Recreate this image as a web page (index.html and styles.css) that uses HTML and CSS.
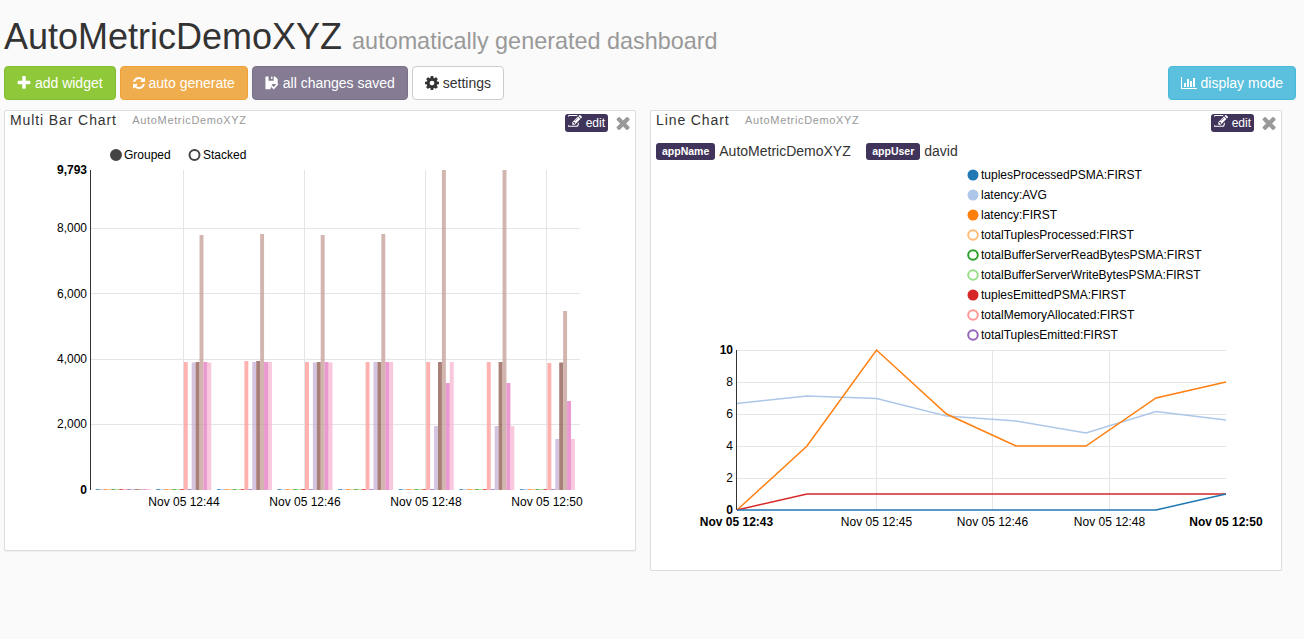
FILE: index.html
```html
<!DOCTYPE html>
<html lang="en">
<head>
    <meta charset="UTF-8">
    <meta name="viewport" content="width=device-width, initial-scale=1.0">
    <title>AutoMetricDemoXYZ</title>
    <link rel="stylesheet" href="styles.css">
</head>
<body>
    <h1 class="page-title">AutoMetricDemoXYZ <small>automatically generated dashboard</small></h1>

    <div class="toolbar">
        <button class="btn btn-add">
            <svg class="icon" viewBox="128 128 1536 1536"><path d="M1600 736v192q0 40-28 68t-68 28h-416v416q0 40-28 68t-68 28h-192q-40 0-68-28t-28-68v-416h-416q-40 0-68-28t-28-68v-192q0-40 28-68t68-28h416v-416q0-40 28-68t68-28h192q40 0 68 28t28 68v416h416q40 0 68 28t28 68z"/></svg>
            add widget
        </button>
        <button class="btn btn-generate">
            <svg class="icon icon-narrow" viewBox="128 128 1536 1536"><path d="M1639 1056q0 5-1 7-64 268-268 434.5t-478 166.5q-146 0-282.500-55t-243.500-157l-129 129q-19 19-45 19t-45-19-19-45v-448q0-26 19-45t45-19h448q26 0 45 19t19 45-19 45l-137 137q71 66 161 102t187 36q134 0 250-65t186-179q11-17 53-117 8-23 30-23h192q13 0 22.500 9.500t9.500 22.500zm25-800v448q0 26-19 45t-45 19h-448q-26 0-45-19t-19-45 19-45l138-138q-148-137-349-137-134 0-250 65t-186 179q-11 17-53 117-8 23-30 23h-199q-13 0-22.500-9.500t-9.500-22.500v-7q65-268 270-434.500t480-166.500q146 0 284 55.500t245 156.500l130-129q19-19 45-19t45 19 19 45z"/></svg>
            auto generate
        </button>
        <button class="btn btn-saved">
            <svg class="icon" viewBox="0 0 16 16"><path fill-rule="evenodd" d="M1 .5h10.500l3 3v5.500h-6l-2.500 6h-5a.5.5 0 0 1-.5-.5v-13.500a.5.5 0 0 1 .5-.5zM4 .5v5h6v-5h-1.500v3h-1.500v-3z"/><path class="save-check" d="M7.500 11.500l2.500 2.500 4.500-5"/></svg>
            all changes saved
        </button>
        <button class="btn btn-settings">
            <svg class="icon" viewBox="128 128 1536 1536"><path d="M1152 896q0-106-75-181t-181-75-181 75-75 181 75 181 181 75 181-75 75-181zm512-109v222q0 12-8 23t-20 13l-185 28q-19 54-39 91 35 50 107 138 10 12 10 25t-9 23q-27 37-99 108t-94 71q-12 0-26-9l-138-108q-44 23-91 38-16 136-29 186-7 28-36 28h-222q-14 0-24.500-8.500t-11.500-21.500l-28-184q-49-16-90-37l-141 107q-10 9-25 9-14 0-25-11-126-114-165-168-7-10-7-23 0-12 8-23 15-21 51-66.500t54-70.500q-27-50-41-99l-183-27q-13-2-21-12.500t-8-23.500v-222q0-12 8-23t19-13l186-28q14-46 39-92-40-57-107-138-10-12-10-24 0-10 9-23 26-36 98.500-107.500t94.500-71.500q13 0 26 10l138 107q44-23 91-38 16-136 29-186 7-28 36-28h222q14 0 24.500 8.500t11.500 21.500l28 184q49 16 90 37l142-107q9-9 24-9 13 0 25 10 129 119 165 170 7 8 7 22 0 12-8 23-15 21-51 66.500t-54 70.500q26 50 41 98l183 28q13 2 21 12.500t8 23.500z"/></svg>
            settings
        </button>
        <button class="btn btn-display">
            <svg class="icon icon-wide" viewBox="0 0 2048 1792"><path d="M640 896v512h-256v-512h256zm384-512v1024h-256v-1024h256zm1024 1152v128h-2048v-1536h128v1408h1920zm-640-896v768h-256v-768h256zm384-384v1152h-256v-1152h256z"/></svg>
            display mode
        </button>
    </div>

    <div class="widgets">
        <!-- Multi bar chart -->
        <section class="widget">
            <header class="widget-head">
                <span class="widget-title">Multi Bar Chart</span>
                <span class="widget-source">AutoMetricDemoXYZ</span>
                <span class="widget-actions">
                    <a class="edit-btn">
                        <svg class="icon" viewBox="128 128 1664 1664"><path d="M888 1184l116-116-152-152-116 116v56h96v96h56zm440-720q-16-16-33 1l-350 350q-17 17-1 33t33-1l350-350q17-17 1-33zm80 594v190q0 119-84.500 203.500t-203.500 84.500h-832q-119 0-203.500-84.500t-84.500-203.500v-832q0-119 84.500-203.500t203.500-84.500h832q63 0 117 25 15 7 18 23 3 17-9 29l-49 49q-14 14-32 8-23-6-45-6h-832q-66 0-113 47t-47 113v832q0 66 47 113t113 47h832q66 0 113-47t47-113v-126q0-13 9-22l64-64q15-15 35-7t20 29zm-96-738l288 288-672 672h-288v-288zm444 132l-92 92-288-288 92-92q28-28 68-28t68 28l152 152q28 28 28 68t-28 68z"/></svg>
                        edit
                    </a>
                    <svg class="close-icon" viewBox="282 282 1208 1272"><path d="M1490 1322q0 40-28 68l-136 136q-28 28-68 28t-68-28l-294-294-294 294q-28 28-68 28t-68-28l-136-136q-28-28-28-68t28-68l294-294-294-294q-28-28-28-68t28-68l136-136q28-28 68-28t68 28l294 294 294-294q28-28 68-28t68 28l136 136q28 28 28 68t-28 68l-294 294 294 294q28 28 28 68z"/></svg>
                </span>
            </header>
            <svg class="chart chart-bars" viewBox="5 141 630 409">
                <g class="legend">
                    <circle class="dot dot-dark" cx="116" cy="155" r="5"/>
                    <text x="124" y="159">Grouped</text>
                    <circle class="dot dot-ring" cx="194.500" cy="155" r="5"/>
                    <text x="203" y="159">Stacked</text>
                </g>
                <g class="grid">
                    <line x1="91" x2="580" y1="228.500" y2="228.500"/>
                    <line x1="91" x2="580" y1="293.500" y2="293.500"/>
                    <line x1="91" x2="580" y1="359.500" y2="359.500"/>
                    <line x1="91" x2="580" y1="424.500" y2="424.500"/>
                    <line x1="183.500" x2="183.500" y1="170" y2="490"/>
                    <line x1="304.500" x2="304.500" y1="170" y2="490"/>
                    <line x1="425.500" x2="425.500" y1="170" y2="490"/>
                    <line x1="546.500" x2="546.500" y1="170" y2="490"/>
                </g>
                <g id="bars"></g>
                <line class="axis" x1="90.500" x2="90.500" y1="170" y2="490"/>
                <g class="tick-y">
                    <text class="strong" x="87" y="174">9,793</text>
                    <text x="87" y="232">8,000</text>
                    <text x="87" y="298">6,000</text>
                    <text x="87" y="363">4,000</text>
                    <text x="87" y="428">2,000</text>
                    <text class="strong" x="87" y="494">0</text>
                </g>
                <g class="tick-x">
                    <text x="184" y="506">Nov 05 12:44</text>
                    <text x="305" y="506">Nov 05 12:46</text>
                    <text x="426" y="506">Nov 05 12:48</text>
                    <text x="547" y="506">Nov 05 12:50</text>
                </g>
            </svg>
        </section>

        <!-- Line chart -->
        <section class="widget">
            <header class="widget-head">
                <span class="widget-title">Line Chart</span>
                <span class="widget-source">AutoMetricDemoXYZ</span>
                <span class="widget-actions">
                    <a class="edit-btn">
                        <svg class="icon" viewBox="128 128 1664 1664"><path d="M888 1184l116-116-152-152-116 116v56h96v96h56zm440-720q-16-16-33 1l-350 350q-17 17-1 33t33-1l350-350q17-17 1-33zm80 594v190q0 119-84.500 203.500t-203.500 84.500h-832q-119 0-203.500-84.500t-84.500-203.500v-832q0-119 84.500-203.500t203.500-84.500h832q63 0 117 25 15 7 18 23 3 17-9 29l-49 49q-14 14-32 8-23-6-45-6h-832q-66 0-113 47t-47 113v832q0 66 47 113t113 47h832q66 0 113-47t47-113v-126q0-13 9-22l64-64q15-15 35-7t20 29zm-96-738l288 288-672 672h-288v-288zm444 132l-92 92-288-288 92-92q28-28 68-28t68 28l152 152q28 28 28 68t-28 68z"/></svg>
                        edit
                    </a>
                    <svg class="close-icon" viewBox="282 282 1208 1272"><path d="M1490 1322q0 40-28 68l-136 136q-28 28-68 28t-68-28l-294-294-294 294q-28 28-68 28t-68-28l-136-136q-28-28-28-68t28-68l294-294-294-294q-28-28-28-68t28-68l136-136q28-28 68-28t68 28l294 294 294-294q28-28 68-28t68 28l136 136q28 28 28 68t-28 68l-294 294 294 294q28 28 28 68z"/></svg>
                </span>
            </header>
            <div class="tags">
                <span class="tag">appName</span><span class="tag-value">AutoMetricDemoXYZ</span>
                <span class="tag">appUser</span><span class="tag-value">david</span>
            </div>
            <svg class="chart chart-lines" viewBox="651 165 630 405">
                <g class="legend">
                    <circle class="dot" cx="973" cy="175" r="5.500" fill="#1f77b4"/>
                    <text x="981" y="179">tuplesProcessedPSMA:FIRST</text>
                    <circle class="dot" cx="973" cy="195" r="5.500" fill="#aec7e8"/>
                    <text x="981" y="199">latency:AVG</text>
                    <circle class="dot" cx="973" cy="215" r="5.500" fill="#ff7f0e"/>
                    <text x="981" y="219">latency:FIRST</text>
                    <circle class="dot ring" cx="973" cy="235" r="4.800" stroke="#ffbb78"/>
                    <text x="981" y="239">totalTuplesProcessed:FIRST</text>
                    <circle class="dot ring" cx="973" cy="255" r="4.800" stroke="#2ca02c"/>
                    <text x="981" y="259">totalBufferServerReadBytesPSMA:FIRST</text>
                    <circle class="dot ring" cx="973" cy="275" r="4.800" stroke="#98df8a"/>
                    <text x="981" y="279">totalBufferServerWriteBytesPSMA:FIRST</text>
                    <circle class="dot" cx="973" cy="295" r="5.500" fill="#d62728"/>
                    <text x="981" y="299">tuplesEmittedPSMA:FIRST</text>
                    <circle class="dot ring" cx="973" cy="315" r="4.800" stroke="#ff9896"/>
                    <text x="981" y="319">totalMemoryAllocated:FIRST</text>
                    <circle class="dot ring" cx="973" cy="335" r="4.800" stroke="#9467bd"/>
                    <text x="981" y="339">totalTuplesEmitted:FIRST</text>
                </g>
                <g class="grid">
                    <line x1="737" x2="1226" y1="350.500" y2="350.500"/>
                    <line x1="737" x2="1226" y1="382.500" y2="382.500"/>
                    <line x1="737" x2="1226" y1="414.500" y2="414.500"/>
                    <line x1="737" x2="1226" y1="446.500" y2="446.500"/>
                    <line x1="737" x2="1226" y1="478.500" y2="478.500"/>
                    <line x1="876.500" x2="876.500" y1="350" y2="510"/>
                    <line x1="992.500" x2="992.500" y1="350" y2="510"/>
                    <line x1="1109.500" x2="1109.500" y1="350" y2="510"/>
                </g>
                <line class="axis" x1="736.500" x2="736.500" y1="350" y2="510"/>
                <polyline class="series series-avg" points="737,403.500 807,396 876.500,398.500 946.500,416 1016,421 1086,433 1156,411.500 1226,420"/>
                <polyline class="series series-latency" points="737,510 807,446 876.500,350 946.500,414 1016,446 1086,446 1156,398 1226,382"/>
                <polyline class="series series-emitted" points="737,510 807,494 876.500,494 946.500,494 1016,494 1086,494 1156,494 1226,494"/>
                <polyline class="series series-processed" points="737,510 807,510 876.500,510 946.500,510 1016,510 1086,510 1156,510 1226,494"/>
                <g class="tick-y">
                    <text class="strong" x="733" y="354">10</text>
                    <text x="733" y="386">8</text>
                    <text x="733" y="418">6</text>
                    <text x="733" y="450">4</text>
                    <text x="733" y="482">2</text>
                    <text class="strong" x="733" y="514">0</text>
                </g>
                <g class="tick-x">
                    <text class="strong" x="736.500" y="526">Nov 05 12:43</text>
                    <text x="876.500" y="526">Nov 05 12:45</text>
                    <text x="992.500" y="526">Nov 05 12:46</text>
                    <text x="1109.500" y="526">Nov 05 12:48</text>
                    <text class="strong" x="1226" y="526">Nov 05 12:50</text>
                </g>
            </svg>
        </section>
    </div>

    <script src="charts.js"></script>
</body>
</html>
```

FILE: styles.css
```css
/* Page */
body {
    margin: 0;
    background: #fafafa;
    color: #333;
    font-family: "Liberation Sans", Arial, sans-serif;
    font-size: 14px;
}

.page-title {
    margin: 0;
    padding: 17px 0 5px 4px;
    font-size: 36px;
    font-weight: 400;
    line-height: 40px;
}

.page-title small {
    color: #999;
    font-size: 23.4px;
}

/* Toolbar */
.toolbar {
    display: flex;
    gap: 4px;
    padding: 0 8px 0 4px;
}

.btn {
    height: 34px;
    padding: 0 12px;
    border: 1px solid transparent;
    border-radius: 4px;
    color: #fff;
    font: inherit;
    white-space: nowrap;
}

.btn-add { background: #8fc93a; border-color: #84bc33; }
.btn-generate { background: #f0ad4e; border-color: #eea236; }
.btn-saved { background: #857c94; border-color: #7a7189; }
.btn-settings { background: #fff; border-color: #ccc; color: #333; }
.btn-display { margin-left: auto; background: #5bc0de; border-color: #46b8da; }

.icon {
    width: 14px;
    height: 14px;
    fill: currentColor;
    vertical-align: -2px;
}

.icon-narrow { width: 12px; height: 12px; vertical-align: -1px; }
.icon-wide { width: 16px; }

.save-check {
    fill: none;
    stroke: #fff;
    stroke-width: 2;
}

/* Widgets */
.widgets {
    display: flex;
    align-items: flex-start;
    gap: 14px;
    margin-top: 10px;
    padding-left: 4px;
}

.widget {
    width: 632px;
    box-sizing: border-box;
    border: 1px solid #ddd;
    border-radius: 2px;
    background: #fff;
    box-shadow: 0 1px 1px rgba(0, 0, 0, .05);
}

.widget-head {
    display: flex;
    align-items: flex-start;
    height: 30px;
    padding: 0 5px;
}

.widget-title {
    margin-right: 15.500px;
    font-size: 14px;
    letter-spacing: .9px;
    line-height: 18px;
}

.widget-source {
    color: #999;
    font-size: 11px;
    letter-spacing: .65px;
    line-height: 18px;
}

.widget-actions {
    display: flex;
    align-items: center;
    gap: 8px;
    margin-left: auto;
    padding: 3px 0 0;
}

.edit-btn {
    display: block;
    height: 18px;
    padding: 0 3px;
    border-radius: 3px;
    background: #41345a;
    color: #fff;
    font-size: 12px;
    line-height: 18px;
}

.close-icon {
    width: 14px;
    height: 14px;
    fill: #999;
}

/* appName / appUser tags */
.tags {
    display: flex;
    align-items: center;
    height: 20px;
    padding: 0 5px;
    margin-bottom: 4px;
}

.tag {
    margin: 1px 4px 0 0;
    padding: 0 6px;
    border-radius: 3px;
    background: #41345a;
    color: #fff;
    font-size: 10.500px;
    font-weight: 700;
    line-height: 17px;
}

.tag-value {
    margin: 0 15.500px 1px 0;
    font-size: 14px;
}

/* Charts */
.chart {
    display: block;
    width: 630px;
    font-size: 12px;
}

.chart-bars { height: 409px; }
.chart-lines { height: 405px; }

.chart text { fill: #000; }

.grid line {
    stroke: #e5e5e5;
    stroke-width: 1;
}

.axis {
    stroke: #333;
    stroke-width: 1;
}

.tick-y text { text-anchor: end; }
.tick-x text { text-anchor: middle; }
.chart text.strong { font-weight: 700; }

.dot-dark { fill: #444; stroke: #444; stroke-width: 2; }
.dot-ring { fill: #fff; stroke: #444; stroke-width: 2; }
.ring { fill: #fff; stroke-width: 2; }

.series {
    fill: none;
    stroke-width: 1.5;
}

.series-avg { stroke: #aec7e8; }
.series-latency { stroke: #ff7f0e; }
.series-emitted { stroke: #d62728; }
.series-processed { stroke: #1f77b4; }
```

FILE: charts.js
```js
// d3 category20 colours, one per metric
const colors = ['#1f77b4', '#aec7e8', '#ff7f0e', '#ffbb78', '#2ca02c', '#98df8a', '#d62728',
    '#ff9896', '#9467bd', '#c5b0d5', '#8c564b', '#c49c94', '#e377c2', '#f7b6d2'];

const baseY = 490;
const barWidth = 3.93;
const groupStep = 60.6;
const firstGroup = 95.7;

// top y of the six tall bars in each group: series 7, 9, 10, 11, 12, 13
const tallSeries = [7, 9, 10, 11, 12, 13];
const groups = [
    null,
    [362, 362.5, 362, 235, 362, 362.5],
    [361, 362, 361, 234, 362, 362],
    [362, 362.5, 362, 235, 362, 362.5],
    [362, 362, 362, 234, 362, 362],
    [362, 426, 362, 170, 383, 362],
    [362, 426, 362, 170, 383, 426],
    [363, 439, 362.5, 311, 401, 439]
];

const bars = document.getElementById('bars');

groups.forEach(function (tops, g) {
    colors.forEach(function (color, s) {
        const tall = tops ? tallSeries.indexOf(s) : -1;
        const y = tall >= 0 ? tops[tall] : baseY - 1;
        const rect = document.createElementNS('http://www.w3.org/2000/svg', 'rect');
        rect.setAttribute('x', firstGroup + g * groupStep + s * barWidth);
        rect.setAttribute('y', y);
        rect.setAttribute('width', barWidth);
        rect.setAttribute('height', baseY - y);
        rect.setAttribute('fill', color);
        rect.setAttribute('fill-opacity', 0.75);
        bars.appendChild(rect);
    });
});
```
